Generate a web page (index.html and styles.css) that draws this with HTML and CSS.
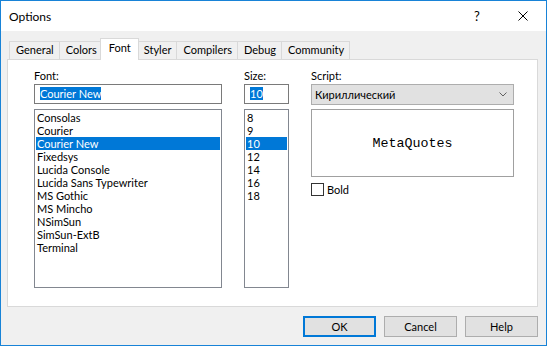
FILE: index.html
```html
<!DOCTYPE html>
<html lang="en">
<head>
  <meta charset="UTF-8">
  <title>Options</title>
  <link rel="stylesheet" href="styles.css">
</head>
<body>
  <div class="window">
    <div class="titlebar">
      <span class="title">Options</span>
      <span class="caption-btn help-btn">?</span>
      <span class="caption-btn">
        <svg width="10" height="10" viewBox="0 0 10 10"><path d="M0.5 0.5L9.5 9.5M9.5 0.5L0.5 9.5" stroke="#000" stroke-width="1" fill="none"/></svg>
      </span>
    </div>

    <div class="client">
      <div class="tabs">
        <div class="tab">General</div>
        <div class="tab">Colors</div>
        <div class="tab active">Font</div>
        <div class="tab">Styler</div>
        <div class="tab">Compilers</div>
        <div class="tab">Debug</div>
        <div class="tab">Community</div>
      </div>

      <div class="panel">
        <div class="col col-font">
          <label>Font:</label>
          <div class="field"><span class="sel">Courier New</span></div>
          <ul class="list">
            <li>Consolas</li>
            <li>Courier</li>
            <li class="selected">Courier New</li>
            <li>Fixedsys</li>
            <li>Lucida Console</li>
            <li>Lucida Sans Typewriter</li>
            <li>MS Gothic</li>
            <li>MS Mincho</li>
            <li>NSimSun</li>
            <li>SimSun-ExtB</li>
            <li>Terminal</li>
          </ul>
        </div>

        <div class="col col-size">
          <label>Size:</label>
          <div class="field"><span class="sel">10</span></div>
          <ul class="list">
            <li>8</li>
            <li>9</li>
            <li class="selected">10</li>
            <li>12</li>
            <li>14</li>
            <li>16</li>
            <li>18</li>
          </ul>
        </div>

        <div class="col col-script">
          <label>Script:</label>
          <div class="combo">
            <span>Кириллический</span>
            <svg width="8" height="5" viewBox="0 0 8 5"><path d="M0.5 0.5L4 4L7.5 0.5" stroke="#606060" fill="none"/></svg>
          </div>
          <div class="preview">MetaQuotes</div>
          <div class="check"><span class="box"></span>Bold</div>
        </div>
      </div>

      <div class="buttons">
        <div class="btn default">OK</div>
        <div class="btn">Cancel</div>
        <div class="btn">Help</div>
      </div>
    </div>
  </div>
</body>
</html>
```

FILE: styles.css
```css
/* General styles */
* {
  margin: 0;
  padding: 0;
  box-sizing: border-box;
}

body {
  font-family: Lato, "Liberation Sans", sans-serif;
  font-size: 11px;
  color: #000;
  background: #fff;
  width: 547px;
  height: 346px;
  overflow: hidden;
}

.window {
  width: 547px;
  height: 346px;
  border: 1px solid #1883d7;
  background: #f0f0f0;
  display: flex;
  flex-direction: column;
}

/* Title bar */
.titlebar {
  height: 30px;
  background: #fff;
  display: flex;
  align-items: center;
}

.title {
  flex: 1;
  font-size: 12px;
  padding-left: 8px;
}

.caption-btn {
  width: 46px;
  height: 30px;
  display: flex;
  align-items: center;
  justify-content: center;
}

.help-btn {
  font-size: 13px;
}

/* Dialog body */
.client {
  flex: 1;
  display: flex;
  flex-direction: column;
  padding: 7px 8px 8px 6px;
}

.tabs {
  height: 21px;
  display: flex;
  align-items: flex-end;
  padding-left: 2px;
}

.tab {
  height: 18px;
  line-height: 16px;
  padding: 0 5px 0 6px;
  border: 1px solid #d9d9d9;
  border-bottom: none;
  margin-right: -1px;
  background: #f0f0f0;
}

.tab.active {
  height: 22px;
  line-height: 18px;
  padding: 0 7px 0 8px;
  margin: 0 -2px -1px;
  background: #fff;
  position: relative;
  z-index: 1;
}

.panel {
  height: 248px;
  border: 1px solid #d9d9d9;
  background: #fff;
  display: flex;
  gap: 22px;
  padding: 8px 0 0 26px;
}

.col-font { width: 188px; }
.col-size { width: 45px; }
.col-script { width: 203px; }

label {
  display: block;
  height: 16px;
  line-height: 15px;
}

.field {
  height: 20px;
  line-height: 18px;
  border: 1px solid #7a7a7a;
  padding-left: 5px;
}

.sel {
  background: #0078d7;
  color: #fff;
}

.list {
  list-style: none;
  margin-top: 5px;
  height: 179px;
  border: 1px solid #828790;
  padding: 1px;
}

.list li {
  height: 13px;
  line-height: 13px;
  padding-left: 1px;
}

.list li.selected {
  background: #0078d7;
  color: #fff;
}

.combo {
  height: 21px;
  border: 1px solid #adadad;
  background: #e1e1e1;
  padding: 0 6px 0 3px;
  display: flex;
  align-items: center;
  justify-content: space-between;
}

.preview {
  margin-top: 4px;
  height: 68px;
  border: 1px solid #a0a0a0;
  display: flex;
  align-items: center;
  justify-content: center;
  font-family: "Liberation Mono", monospace;
  font-size: 13.33px;
}

.check {
  margin-top: 6px;
  display: flex;
  align-items: center;
  gap: 3px;
}

.check .box {
  width: 13px;
  height: 13px;
  border: 1px solid #333;
  background: #fff;
}

/* Buttons */
.buttons {
  margin-top: 9px;
  display: flex;
  justify-content: flex-end;
  gap: 8px;
}

.btn {
  width: 73px;
  height: 21px;
  border: 1px solid #adadad;
  background: #e1e1e1;
  display: flex;
  align-items: center;
  justify-content: center;
}

.btn.default {
  border: 2px solid #0078d7;
}
```
